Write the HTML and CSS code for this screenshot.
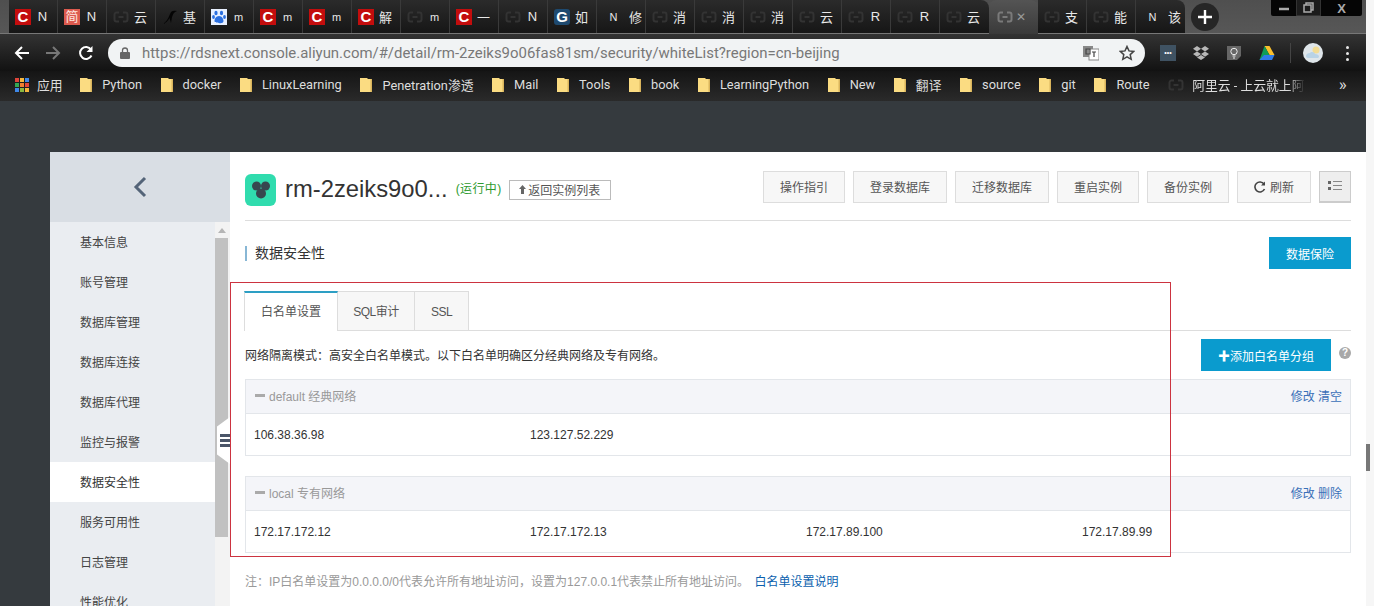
FILE: index.html
```html
<!DOCTYPE html>
<html lang="zh-CN">
<head>
    <meta charset="UTF-8">
    <title>RDS 数据安全性</title>
    <link rel="stylesheet" href="styles.css">
</head>
<body>

<svg class="defs" width="0" height="0">
    <symbol id="cloud" viewBox="0 0 16 16">
        <path d="M6 3.500H3.500A2 2 0 0 0 1.500 5.500V10.500A2 2 0 0 0 3.500 12.500H6M10 3.500h2.500A2 2 0 0 1 14.500 5.500V10.500A2 2 0 0 1 12.500 12.500H10M5.500 8h5" fill="none" stroke="currentColor" stroke-width="2"/>
    </symbol>
    <symbol id="folder" viewBox="0 0 12 16">
        <path d="M0 1h7l1 1h4v13H0z" fill="#fbdc82"/>
        <path d="M10.500 2H12v13h-1.500z" fill="#d9b45c"/>
    </symbol>
</svg>

<div class="window">
    <div class="tabstrip">
        <div class="tab"><span class="fav fav-c">C</span><span class="tab-t">N</span></div>
        <div class="tab"><span class="fav fav-jian">简</span><span class="tab-t">N</span></div>
        <div class="tab"><svg class="fav-cloud"><use href="#cloud"/></svg><span class="tab-t">云</span></div>
        <div class="tab">
            <svg class="fav-svg" viewBox="0 0 16 16"><path d="M1 15C4 13 6 10 8 5 9 2 11 1 15 2 12 3 11 5 10 8L9 14 7.500 9C6 12 4 14 1 15z" fill="#050505"/></svg>
            <span class="tab-t">基</span>
        </div>
        <div class="tab">
            <svg class="fav-svg fav-paw" viewBox="0 0 16 16">
                <rect width="16" height="16" fill="#e8f0ff"/>
                <ellipse cx="5" cy="4" rx="1.600" ry="2.200" fill="#2a6fe0"/>
                <ellipse cx="10.500" cy="4" rx="1.600" ry="2.200" fill="#2a6fe0"/>
                <ellipse cx="2.500" cy="8" rx="1.400" ry="2" fill="#2a6fe0"/>
                <ellipse cx="13.500" cy="8" rx="1.400" ry="2" fill="#2a6fe0"/>
                <path d="M8 7c3 0 4.500 3 4.500 5S10 14.500 8 14 3.500 14 3.500 12 5 7 8 7z" fill="#2a6fe0"/>
            </svg>
            <span class="tab-t small">m</span>
        </div>
        <div class="tab"><span class="fav fav-c">C</span><span class="tab-t small">m</span></div>
        <div class="tab"><span class="fav fav-c">C</span><span class="tab-t small">m</span></div>
        <div class="tab"><span class="fav fav-c">C</span><span class="tab-t">解</span></div>
        <div class="tab"><svg class="fav-cloud"><use href="#cloud"/></svg><span class="tab-t small">m</span></div>
        <div class="tab"><span class="fav fav-c">C</span><span class="tab-t">一</span></div>
        <div class="tab"><svg class="fav-cloud"><use href="#cloud"/></svg><span class="tab-t">N</span></div>
        <div class="tab"><span class="fav fav-g">G</span><span class="tab-t">如</span></div>
        <div class="tab tab-plain"><span class="tab-t small">N</span><span class="tab-t">修</span></div>
        <div class="tab"><svg class="fav-cloud"><use href="#cloud"/></svg><span class="tab-t">消</span></div>
        <div class="tab"><svg class="fav-cloud"><use href="#cloud"/></svg><span class="tab-t">消</span></div>
        <div class="tab"><svg class="fav-cloud"><use href="#cloud"/></svg><span class="tab-t">消</span></div>
        <div class="tab"><svg class="fav-cloud"><use href="#cloud"/></svg><span class="tab-t">云</span></div>
        <div class="tab"><svg class="fav-cloud"><use href="#cloud"/></svg><span class="tab-t">R</span></div>
        <div class="tab"><svg class="fav-cloud"><use href="#cloud"/></svg><span class="tab-t">R</span></div>
        <div class="tab tab-last"><svg class="fav-cloud"><use href="#cloud"/></svg><span class="tab-t">云</span></div>
        <div class="tab tab-active"><svg class="fav-cloud"><use href="#cloud"/></svg><span class="tab-x">✕</span></div>
        <div class="tab"><svg class="fav-cloud"><use href="#cloud"/></svg><span class="tab-t">支</span></div>
        <div class="tab"><svg class="fav-cloud"><use href="#cloud"/></svg><span class="tab-t">能</span></div>
        <div class="tab tab-plain tab-last"><span class="tab-t small">N</span><span class="tab-t">该</span></div>
        <div class="new-tab">
            <svg viewBox="0 0 14 14" width="14" height="14"><path d="M7 0v14M0 7h14" stroke="#fff" stroke-width="2.400"/></svg>
        </div>
        <div class="win-btns">
            <span class="win-btn"><svg viewBox="0 0 10 10" width="10" height="10"><path d="M0 6h10" stroke="#aaa" stroke-width="2.500"/></svg></span>
            <span class="win-btn win-restore"><svg viewBox="0 0 11 11" width="11" height="11"><path d="M3 3V1h7v7H8M1 3h7v7H1z" fill="none" stroke="#aaa" stroke-width="1.500"/></svg></span>
            <span class="win-btn win-close">X</span>
        </div>
    </div>

    <div class="toolbar">
        <svg class="nav-ico" viewBox="0 0 16 16"><path d="M15 8H2M8 2 2 8l6 6" fill="none" stroke="#fff" stroke-width="2"/></svg>
        <svg class="nav-ico nav-fwd" viewBox="0 0 16 16"><path d="M1 8h13M8 2l6 6-6 6" fill="none" stroke="#777" stroke-width="2"/></svg>
        <svg class="nav-ico nav-reload" viewBox="0 0 16 16"><path d="M13.500 10.500A6 6 0 1 1 13 4.500" fill="none" stroke="#fff" stroke-width="2"/><path d="M14.500 1v6h-6z" fill="#fff"/></svg>
        <div class="omnibox">
            <svg class="lock" viewBox="0 0 10 12"><path d="M2.500 5V3.500a2.500 2.500 0 0 1 5 0V5" fill="none" stroke="#666" stroke-width="1.300"/><rect y="5" width="10" height="7" rx="1" fill="#666"/></svg>
            <span class="url">https://rdsnext.console.aliyun.com/#/detail/rm-2zeiks9o06fas81sm/security/whiteList?region=cn-beijing</span>
            <svg class="translate" viewBox="0 0 16 16">
                <rect x="0" y="1" width="10" height="11" fill="#888"/>
                <rect x="6" y="4" width="10" height="11" fill="#fff" stroke="#888"/>
                <path d="M3 4h4v5H3zM9 7h4M11 7v5" fill="none" stroke="#444" stroke-width="1.200"/>
            </svg>
            <svg class="star" viewBox="0 0 16 16"><path d="M8 1.500l2 4.400 4.800.5-3.600 3.200 1 4.700L8 11.900 3.800 14.300l1-4.700L1.200 6.400 6 5.900z" fill="none" stroke="#444" stroke-width="1.500"/></svg>
        </div>
        <div class="ext-row">
            <span class="ext ext-dots">•••</span>
            <svg class="ext" viewBox="0 0 16 16"><path d="M4 1l4 2.700-4 2.700L0 3.700zM12 1l4 2.700-4 2.700-4-2.700zM4 6.400l4 2.700-4 2.700-4-2.700zM12 6.400l4 2.700-4 2.700-4-2.700zM4 12.400l4-2.500 4 2.500-4 2.600z" fill="#b8b8b8"/></svg>
            <svg class="ext" viewBox="0 0 16 16"><path d="M1 1h14v10l-4 4H1z" fill="#666"/><circle cx="8" cy="6.500" r="3.200" fill="none" stroke="#eee"/><path d="M6.500 11h3M7 13h2" stroke="#eee"/></svg>
            <svg class="ext" viewBox="0 0 16 16"><path d="M5.500 1h5l5 9h-5z" fill="#fbc02d"/><path d="M5.500 1l5 9-2.500 5-7.500 0z" fill="#0f9d58"/><path d="M5 10h10.500L13 15H.5z" fill="#2f7be8"/></svg>
            <span class="ext-sep"></span>
            <svg class="avatar" viewBox="0 0 20 20"><circle cx="10" cy="10" r="10" fill="#dfe6ea"/><circle cx="13" cy="7" r="3.500" fill="#f2dc94"/><path d="M3 13c0-2 2-3 4-3 1-2 5-1 5 1 2 0 4 1 4 2.500 0 1-1 1.500-2 1.500H5c-1 0-2-1-2-2z" fill="#b9d3e6"/></svg>
            <span class="menu-dots"><i></i><i></i><i></i></span>
        </div>
    </div>

    <div class="bookmarks">
        <span class="bm bm-apps">
            <span class="apps-grid">
                <i class="c1"></i><i class="c2"></i><i class="c3"></i>
                <i class="c4"></i><i class="c5"></i><i class="c1"></i>
                <i class="c3"></i><i class="c6"></i><i class="c2"></i>
            </span>
            应用
        </span>
        <span class="bm"><svg class="folder"><use href="#folder"/></svg>Python</span>
        <span class="bm"><svg class="folder"><use href="#folder"/></svg>docker</span>
        <span class="bm"><svg class="folder"><use href="#folder"/></svg>LinuxLearning</span>
        <span class="bm"><svg class="folder"><use href="#folder"/></svg>Penetration渗透</span>
        <span class="bm"><svg class="folder"><use href="#folder"/></svg>Mail</span>
        <span class="bm"><svg class="folder"><use href="#folder"/></svg>Tools</span>
        <span class="bm"><svg class="folder"><use href="#folder"/></svg>book</span>
        <span class="bm"><svg class="folder"><use href="#folder"/></svg>LearningPython</span>
        <span class="bm"><svg class="folder"><use href="#folder"/></svg>New</span>
        <span class="bm"><svg class="folder"><use href="#folder"/></svg>翻译</span>
        <span class="bm"><svg class="folder"><use href="#folder"/></svg>source</span>
        <span class="bm"><svg class="folder"><use href="#folder"/></svg>git</span>
        <span class="bm"><svg class="folder"><use href="#folder"/></svg>Route</span>
        <span class="bm bm-ali"><svg class="bm-cloud"><use href="#cloud"/></svg><span class="bm-ali-t">阿里云 - 上云就上阿里云</span></span>
        <span class="bm-more">»</span>
    </div>

    <div class="page">
        <div class="sidebar">
            <div class="side-head">
                <svg width="14" height="22" viewBox="0 0 14 22"><path d="M12 2 3 11l9 9" fill="none" stroke="#546478" stroke-width="3"/></svg>
            </div>
            <div class="side-body">
                <ul class="side-menu">
                    <li>基本信息</li>
                    <li>账号管理</li>
                    <li>数据库管理</li>
                    <li>数据库连接</li>
                    <li>数据库代理</li>
                    <li>监控与报警</li>
                    <li class="active">数据安全性</li>
                    <li>服务可用性</li>
                    <li>日志管理</li>
                    <li>性能优化</li>
                </ul>
                <div class="side-scroll">
                    <span class="scroll-up"></span>
                    <span class="scroll-thumb"></span>
                </div>
            </div>
        </div>

        <div class="main">
            <div class="inst-head">
                <span class="inst-ico">
                    <svg width="20" height="20" viewBox="0 0 20 20"><circle cx="5.500" cy="6" r="4.500" fill="#37474f"/><circle cx="14.500" cy="6" r="4.500" fill="#37474f"/><circle cx="10" cy="13.500" r="5" fill="#37474f"/></svg>
                </span>
                <span class="inst-name">rm-2zeiks9o0...</span>
                <span class="inst-state">(运行中)</span>
                <span class="back-btn">
                    <svg width="7" height="9" viewBox="0 0 7 9"><path d="M3.500 0 7 4H5v5H2V4H0z" fill="#666"/></svg>
                    返回实例列表
                </span>
                <span class="head-btns">
                    <span class="btn">操作指引</span>
                    <span class="btn">登录数据库</span>
                    <span class="btn">迁移数据库</span>
                    <span class="btn">重启实例</span>
                    <span class="btn">备份实例</span>
                    <span class="btn btn-refresh">
                        <svg width="12" height="12" viewBox="0 0 12 12"><path d="M10.500 8A5 5 0 1 1 10 3" fill="none" stroke="#444" stroke-width="1.600"/><path d="M11 .5v4H7z" fill="#444"/></svg>
                        刷新
                    </span>
                    <span class="btn btn-list">
                        <svg width="14" height="12" viewBox="0 0 14 12"><path d="M0 1h3v3H0zM0 7h3v3H0z" fill="#666"/><path d="M5 1.500h9M5 5.500h9M5 9.500h9" stroke="#888"/></svg>
                    </span>
                </span>
            </div>

            <div class="sec-head">
                <span class="sec-title">数据安全性</span>
                <span class="btn-blue btn-insure">数据保险</span>
            </div>

            <div class="tabs">
                <span class="tb tb-on">白名单设置</span>
                <span class="tb tb-sql">SQL审计</span>
                <span class="tb tb-ssl">SSL</span>
            </div>

            <div class="mode-row">
                <span class="mode-t">网络隔离模式：高安全白名单模式。以下白名单明确区分经典网络及专有网络。</span>
                <span class="btn-blue btn-add"><b>✚</b>添加白名单分组</span>
                <span class="help">?</span>
            </div>

            <div class="panel">
                <div class="panel-head">
                    <span class="panel-t"><i></i>default 经典网络</span>
                    <span class="panel-ops">修改 清空</span>
                </div>
                <div class="ip-row">
                    <span>106.38.36.98</span>
                    <span>123.127.52.229</span>
                </div>
            </div>

            <div class="panel">
                <div class="panel-head">
                    <span class="panel-t"><i></i>local 专有网络</span>
                    <span class="panel-ops">修改 删除</span>
                </div>
                <div class="ip-row">
                    <span>172.17.172.12</span>
                    <span>172.17.172.13</span>
                    <span>172.17.89.100</span>
                    <span>172.17.89.99</span>
                </div>
            </div>

            <p class="note">注：IP白名单设置为0.0.0.0/0代表允许所有地址访问，设置为127.0.0.1代表禁止所有地址访问。 <a>白名单设置说明</a></p>
        </div>
    </div>

    <div class="side-handle"><i></i><i></i><i></i></div>
    <div class="red-box"></div>
</div>

<div class="edge"><span class="edge-thumb"></span></div>

</body>
</html>
```

FILE: styles.css
```css
* {
    box-sizing: border-box;
}

html, body {
    margin: 0;
    height: 606px;
    overflow: hidden;
}

body {
    display: flex;
    background-color: #ffffff;
    font-family: "Liberation Sans", "Noto Sans CJK SC", sans-serif;
    font-size: 12px;
    color: #333333;
}

.defs {
    position: absolute;
}

.window {
    position: relative;
    width: 1366px;
    height: 606px;
    flex: none;
    overflow: hidden;
    background-color: #353a3e;
}

.edge {
    width: 8px;
    background-color: #f6f6f6;
    padding-top: 444px;
}

.edge-thumb {
    display: block;
    width: 4px;
    height: 27px;
    background-color: #777777;
}

/* browser tabs */
.tabstrip {
    display: flex;
    height: 33px;
    padding-left: 9px;
    background: linear-gradient(#4f4f4f, #575757);
}

.tab {
    position: relative;
    display: flex;
    align-items: center;
    flex: none;
    width: 49px;
    height: 33px;
    padding-left: 6px;
    gap: 5px;
    background: linear-gradient(#2b2b2b, #161616);
    border-right: 1px solid #3a3a3a;
}

.tab-last {
    border-right: none;
    border-top-right-radius: 8px;
}

.tab-active {
    z-index: 1;
    height: 34px;
    gap: 3px;
    padding-left: 8px;
    border-right: none;
    border-radius: 8px 8px 0 0;
    background: linear-gradient(#545454, #3a3a3a);
}

.tab-active .fav-cloud {
    color: #7a7a7a;
}

.tab-plain {
    padding-left: 10px;
    gap: 9px;
}

.tab-t {
    width: 13px;
    font-size: 13px;
    color: #e8e8e8;
    text-align: center;
    overflow: hidden;
}

.tab-t.small {
    font-size: 11px;
}

.tab-x {
    font-size: 12px;
    color: #9a9a9a;
}

.fav {
    flex: none;
    width: 16px;
    height: 16px;
    font-size: 15px;
    line-height: 16px;
    font-weight: bold;
    text-align: center;
    color: #ffffff;
}

.fav-c {
    background-color: #c30d0d;
}

.fav-jian {
    background-color: #dc5a4e;
    font-size: 13px;
    font-weight: normal;
    color: #ffe8e0;
}

.fav-g {
    border-radius: 3px;
    background-color: #1e4a70;
}

.fav-cloud {
    flex: none;
    width: 16px;
    height: 16px;
    color: #333333;
}

.fav-svg {
    flex: none;
    width: 16px;
    height: 16px;
}

.new-tab {
    display: flex;
    flex: none;
    align-items: center;
    justify-content: center;
    width: 28px;
    height: 28px;
    margin: 3px 0 0 6px;
    border-radius: 50%;
    background-color: #262626;
}

.win-btns {
    display: flex;
    flex: none;
    height: 16px;
    margin-left: 52px;
    background-color: #050505;
    border-radius: 0 0 2px 2px;
}

.win-btn {
    display: flex;
    align-items: center;
    justify-content: center;
    width: 25px;
    height: 16px;
    color: #aaaaaa;
    font-size: 13px;
    font-weight: bold;
}

.win-restore {
    border: 1px solid #333333;
    border-top: none;
    background-color: #1c1c1c;
}

.win-close {
    width: 41px;
}

/* address bar */
.toolbar {
    display: flex;
    align-items: flex-start;
    height: 38px;
    padding: 5px 0 0 14px;
    border-top: 1px solid #777777;
    background: linear-gradient(#333333, #121212);
}

.nav-ico {
    flex: none;
    width: 16px;
    height: 16px;
    margin-top: 6px;
}

.nav-fwd {
    margin-left: 15px;
}

.nav-reload {
    margin-left: 17px;
}

.omnibox {
    display: flex;
    align-items: center;
    width: 1037px;
    height: 28px;
    margin-left: 14px;
    padding-left: 12px;
    border-radius: 14px;
    background-color: #f1f3f4;
}

.lock {
    flex: none;
    width: 10px;
    height: 12px;
}

.url {
    flex: none;
    width: 941px;
    margin-left: 12px;
    font-family: "Roboto", sans-serif;
    font-size: 14.95px;
    color: #787878;
}

.translate {
    flex: none;
    width: 16px;
    height: 16px;
    margin-left: 0;
}

.star {
    flex: none;
    width: 16px;
    height: 16px;
    margin-left: 20px;
}

.ext-row {
    display: flex;
    align-items: center;
    height: 28px;
    margin-left: 15px;
}

.ext {
    flex: none;
    width: 16px;
    height: 16px;
    margin-right: 17px;
}

.ext-dots {
    background-color: #3f5262;
    color: #ffffff;
    font-size: 7px;
    line-height: 16px;
    text-align: center;
    overflow: hidden;
}

.ext-sep {
    width: 1px;
    height: 20px;
    margin-left: -2px;
    background-color: #444444;
}

.avatar {
    width: 20px;
    height: 20px;
    margin-left: 12px;
}

.menu-dots {
    display: flex;
    flex-direction: column;
    gap: 3px;
    margin-left: 23px;
}

.menu-dots i {
    width: 3px;
    height: 3px;
    border-radius: 50%;
    background-color: #e8e8e8;
}

/* bookmarks */
.bookmarks {
    display: flex;
    align-items: center;
    gap: 18.6px;
    height: 30px;
    padding: 0 0 3px 15px;
    background: linear-gradient(#151515, #2a2a2a);
    font-family: "Roboto", "Noto Sans CJK SC", sans-serif;
    font-size: 12.8px;
    color: #dddddd;
}

.bm {
    display: flex;
    align-items: center;
    gap: 10px;
    white-space: nowrap;
}

.bm-apps {
    gap: 8px;
    margin-right: -1px;
}

.apps-grid {
    display: grid;
    grid-template-columns: repeat(3, 4px);
    grid-auto-rows: 4px;
    gap: 1px;
}

.apps-grid i {
    display: block;
}

.c1 { background-color: #e0453a; }
.c2 { background-color: #f6b73c; }
.c3 { background-color: #3f88e8; }
.c4 { background-color: #34a853; }
.c5 { background-color: #f08030; }
.c6 { background-color: #8ab840; }

.folder {
    flex: none;
    width: 12px;
    height: 16px;
}

.bm-ali {
    gap: 8px;
}

.bm-cloud {
    flex: none;
    width: 16px;
    height: 16px;
    color: #333333;
}

.bm-ali-t {
    width: 113px;
    overflow: hidden;
    -webkit-mask-image: linear-gradient(90deg, #000 85%, transparent);
    mask-image: linear-gradient(90deg, #000 85%, transparent);
}

.bm-more {
    margin-left: 15px;
    font-size: 17px;
    line-height: 17px;
}

/* page */
.page {
    display: flex;
    height: 505px;
    padding: 51px 0 0 50px;
}

.sidebar {
    flex: none;
    width: 180px;
    background-color: #eaedf1;
}

.side-head {
    display: flex;
    align-items: center;
    justify-content: center;
    height: 70px;
    background-color: #d9dee4;
}

.side-body {
    display: flex;
    height: 384px;
}

.side-menu {
    flex: none;
    width: 165px;
    height: 384px;
    margin: 0;
    padding: 0;
    list-style: none;
    overflow: hidden;
}

.side-menu li {
    height: 40px;
    padding: 1px 0 0 30px;
    line-height: 40px;
    color: #444444;
}

.side-menu li.active {
    background-color: #ffffff;
    color: #333333;
}

.side-scroll {
    flex: 1;
    padding-top: 6px;
    background-color: #f3f3f3;
}

.scroll-up {
    display: block;
    width: 0;
    height: 0;
    margin: 0 0 5px 3px;
    border: 4px solid transparent;
    border-top: none;
    border-bottom: 5px solid #b5b5b5;
}

.scroll-thumb {
    display: block;
    width: 13px;
    height: 299px;
    background-color: #c1c1c1;
}

.side-handle {
    position: absolute;
    left: 217px;
    top: 417px;
    display: flex;
    flex-direction: column;
    justify-content: center;
    gap: 2px;
    width: 13px;
    height: 47px;
    padding-left: 3px;
    background-color: #ffffff;
    clip-path: polygon(100% 0, 0 20%, 0 80%, 100% 100%);
}

.side-handle i {
    display: block;
    height: 3px;
    background-color: #4a5568;
}

.red-box {
    position: absolute;
    left: 230px;
    top: 282px;
    width: 941px;
    height: 275px;
    border: 1px solid #cc3340;
}

.main {
    flex: 1;
    min-width: 0;
    padding: 0 15px;
    background-color: #ffffff;
}

.inst-head {
    display: flex;
    align-items: center;
    height: 69px;
    padding-top: 5px;
    border-bottom: 1px solid #dddddd;
}

.inst-ico {
    display: flex;
    align-items: center;
    justify-content: center;
    width: 31px;
    height: 32px;
    margin-top: 2px;
    border-radius: 6px;
    background-color: #30dcae;
}

.inst-name {
    margin-left: 9px;
    font-size: 23.8px;
    color: #333333;
}

.inst-state {
    margin: -3px 0 0 8px;
    letter-spacing: 0.4px;
    color: #2e9a2e;
}

.back-btn {
    display: flex;
    align-items: center;
    gap: 2px;
    justify-content: center;
    width: 102px;
    height: 20px;
    margin: 2px 0 0 7px;
    border: 1px solid #bbbbbb;
    color: #555555;
}

.head-btns {
    display: flex;
    gap: 8px;
    margin: -4px 0 0 auto;
}

.btn {
    display: flex;
    align-items: center;
    justify-content: center;
    gap: 4px;
    height: 32px;
    padding: 0 16px;
    border: 1px solid #dddddd;
    background-color: #f7f7f7;
    color: #555555;
}

.btn-list {
    width: 32px;
    padding: 0;
    border-color: #cccccc;
    border-bottom-width: 2px;
    background-color: #eeeeee;
}

.sec-head {
    display: flex;
    align-items: center;
    justify-content: space-between;
    height: 32px;
    margin-top: 16px;
}

.sec-title {
    height: 15px;
    padding-left: 8px;
    border-left: 2px solid #88b7d5;
    font-size: 14px;
    line-height: 15px;
    color: #333333;
}

.btn-blue {
    display: flex;
    align-items: center;
    justify-content: center;
    height: 32px;
    background-color: #0a9bce;
    color: #ffffff;
}

.btn-insure {
    width: 82px;
}

.btn-add {
    width: 130px;
    margin-left: auto;
}

.btn-add b {
    font-size: 12px;
}

.tabs {
    display: flex;
    height: 40px;
    margin-top: 22px;
    border-bottom: 1px solid #dddddd;
}

.tb {
    height: 40px;
    padding: 0 16px;
    border: 1px solid #dddddd;
    border-left: none;
    background-color: #f7f7f7;
    line-height: 40px;
    text-align: center;
    color: #555555;
}

.tb-on {
    margin-left: -1px;
    padding: 0 16px;
    border-left: 1px solid #dddddd;
    border-top: 2px solid #2d9fc4;
    border-bottom: none;
    background-color: #ffffff;
    line-height: 38px;
}

.tb-sql {
    width: 77px;
    padding: 0;
    letter-spacing: -0.5px;
}

.tb-ssl {
    width: 54px;
    padding: 0;
    letter-spacing: -0.5px;
}

.mode-row {
    display: flex;
    align-items: center;
    height: 32px;
    margin: 8px 0;
}

.mode-t {
    padding-bottom: 2px;
}

.help {
    width: 12px;
    height: 12px;
    margin: -4px 0 0 8px;
    border-radius: 50%;
    background-color: #a8a8a8;
    color: #ffffff;
    font-size: 10px;
    font-weight: bold;
    line-height: 12px;
    text-align: center;
}

.panel {
    border: 1px solid #e3e6ea;
    margin-bottom: 20px;
}

.panel-head {
    display: flex;
    align-items: center;
    justify-content: space-between;
    height: 34px;
    padding: 0 8px 2px 9px;
    border-bottom: 1px solid #e3e6ea;
    background-color: #f4f5f9;
}

.panel-t {
    display: flex;
    align-items: center;
    color: #999999;
}

.panel-t i {
    width: 10px;
    height: 3px;
    margin-right: 4px;
    background-color: #aaaaaa;
}

.panel-ops {
    color: #3a70b8;
}

.ip-row {
    display: grid;
    grid-template-columns: repeat(3, 276px) 1fr;
    align-items: center;
    height: 41px;
    padding-left: 8px;
    color: #333333;
}

.note {
    margin: -1px 0 0;
    color: #999999;
}

.note a {
    margin-left: 2px;
    color: #0b5fae;
}
```
